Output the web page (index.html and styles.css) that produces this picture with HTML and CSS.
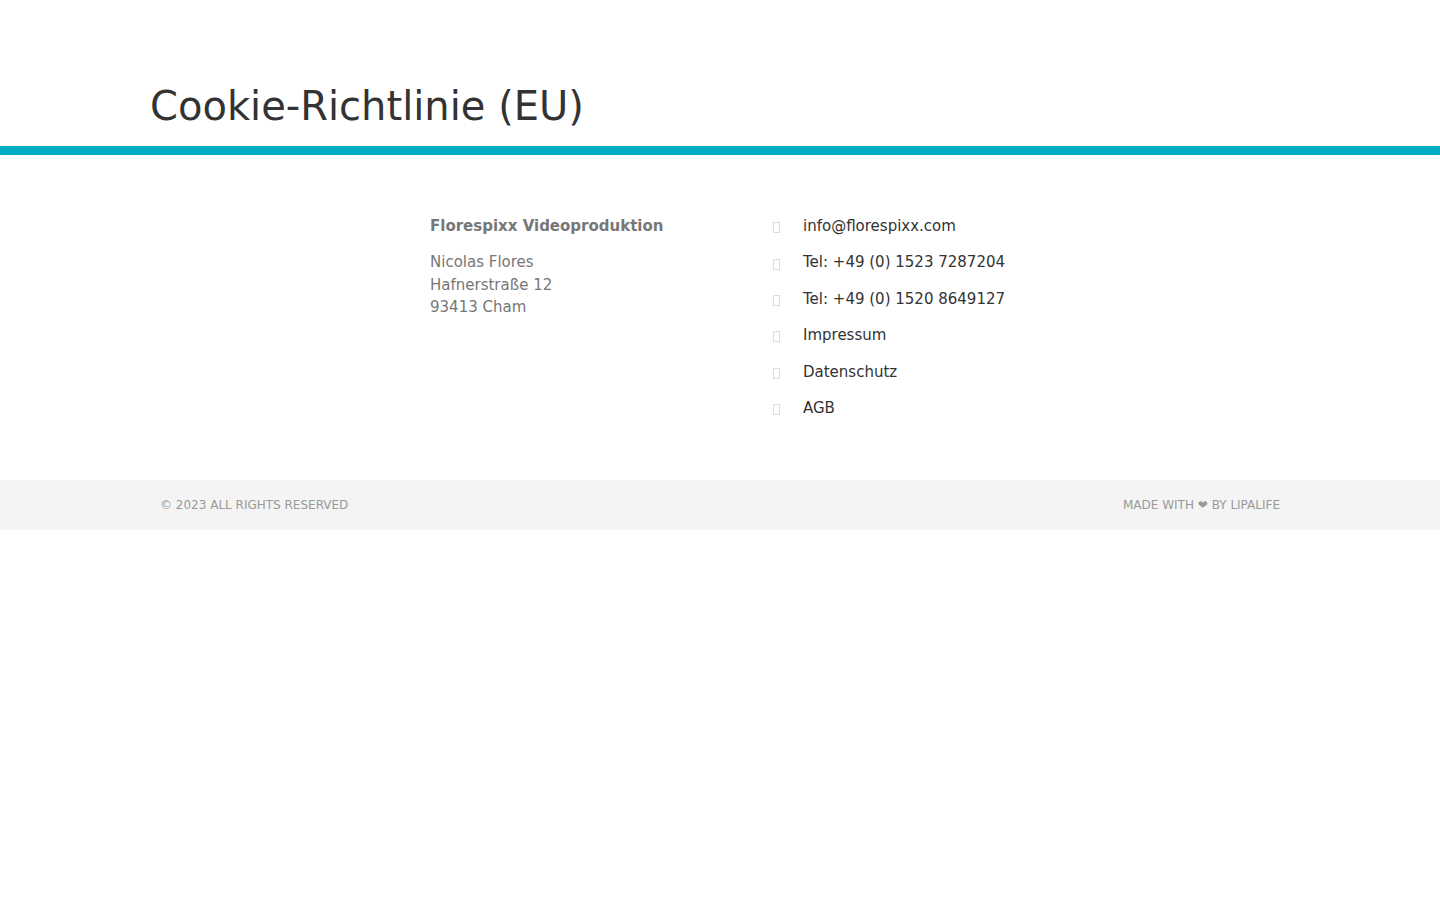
FILE: index.html
```html
<!DOCTYPE html>
<html lang="de">

<head>
    <meta charset="utf-8">
    <meta name="viewport" content="width=device-width, initial-scale=1.0">
    <title>Cookie-Richtlinie (EU) – Florespixx Videoproduktion</title>
    <link rel="stylesheet" href="styles.css">
</head>

<body>

    <header class="page-title">
        <h1>Cookie-Richtlinie (EU)</h1>
    </header>

    <section class="kontakt">
        <div class="adresse">
            <h3>Florespixx Videoproduktion</h3>
            <p>Nicolas Flores<br>Hafnerstraße 12<br>93413 Cham</p>
        </div>

        <ul class="links">
            <li><span class="icon"></span><a href="mailto:info@florespixx.com">info@florespixx.com</a></li>
            <li><span class="icon"></span><a href="tel:+4915237287204">Tel: +49 (0) 1523 7287204</a></li>
            <li><span class="icon"></span><a href="tel:+4915208649127">Tel: +49 (0) 1520 8649127</a></li>
            <li><span class="icon"></span><a href="#">Impressum</a></li>
            <li><span class="icon"></span><a href="#">Datenschutz</a></li>
            <li><span class="icon"></span><a href="#">AGB</a></li>
        </ul>
    </section>

    <footer>
        <span>© 2023 All rights reserved</span>
        <span>Made with ❤ by Lipalife</span>
    </footer>

</body></html>
```

FILE: styles.css
```css
body {
    margin: 0;
    font-family: 'DejaVu Sans', sans-serif;
    background-color: white;
    color: #333;
}

.page-title {
    padding: 82px 150px 16px 150px;
    border-bottom: 9px solid #00adc4;
}

.page-title h1 {
    margin: 0;
    font-size: 40px;
    font-weight: normal;
    line-height: 48px;
    color: #333;
}

.kontakt {
    display: flex;
    padding: 60px 0 61px 430px;
}

.adresse {
    width: 343px;
    font-size: 15px;
    line-height: 22.5px;
    color: #777;
}

.adresse h3 {
    margin: 0 0 13.5px 0;
    font-size: 15px;
    font-weight: bold;
}

.adresse p {
    margin: 0;
}

.links {
    list-style: none;
    margin: 0;
    padding: 0;
    font-size: 15px;
    line-height: 22.5px;
}

.links li {
    display: flex;
    align-items: center;
    margin-bottom: 13.9px;
}

.links li:last-child {
    margin-bottom: 0;
}

.links a {
    color: #333;
    text-decoration: none;
}

/* leeres Icon-Kästchen */
.icon {
    display: inline-block;
    box-sizing: border-box;
    width: 7px;
    height: 11px;
    margin: 3px 23px 0 0;
    border: 1px solid #ddd;
}

footer {
    display: flex;
    justify-content: space-between;
    padding: 0 160px;
    height: 50px;
    align-items: center;
    background-color: #f4f4f4;
    font-size: 12px;
    text-transform: uppercase;
    color: #999;
}
```
